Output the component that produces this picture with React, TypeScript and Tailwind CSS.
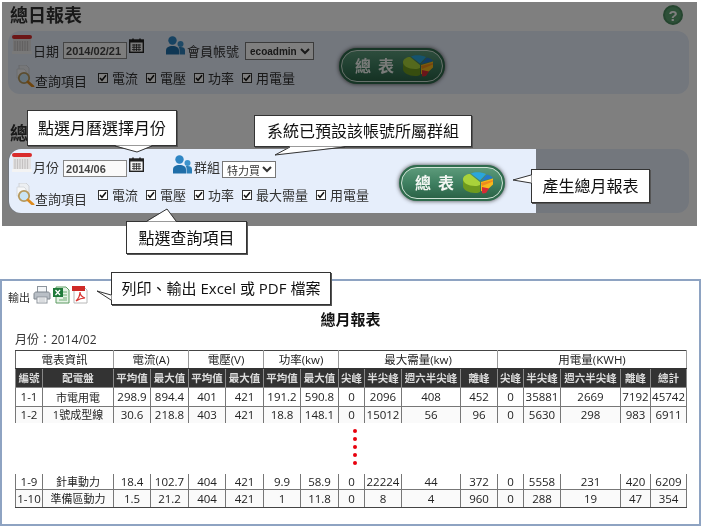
const dataTop: (string | number)[][] = [
  ["1-1", "市電用電", 298.9, 894.4, 401, 421, 191.2, 590.8, 0, 2096, 408, 452, 0, 35881, 2669, 7192, 45742],
  ["1-2", "1號成型線", 30.6, 218.8, 403, 421, 18.8, 148.1, 0, 15012, 56, 96, 0, 5630, 298, 983, 6911],
]

const dataBottom: (string | number)[][] = [
  ["1-9", "針車動力", 18.4, 102.7, 404, 421, 9.9, 58.9, 0, 22224, 44, 372, 0, 5558, 231, 420, 6209],
  ["1-10", "準備區動力", 1.5, 21.2, 404, 421, 1, 11.8, 0, 8, 4, 960, 0, 288, 19, 47, 354],
]

const groupHeads: [string, number][] = [
  ["電表資訊", 2],
  ["電流(A)", 2],
  ["電壓(V)", 2],
  ["功率(kw)", 2],
  ["最大需量(kw)", 4],
  ["用電量(KWH)", 5],
]

const colHeads = ["編號", "配電盤", "平均值", "最大值", "平均值", "最大值", "平均值", "最大值", "尖峰", "半尖峰", "週六半尖峰", "離峰", "尖峰", "半尖峰", "週六半尖峰", "離峰", "總計"]
const colWidths = [27, 71, 37, 38, 37, 38, 37, 38, 26, 37, 59, 37, 26, 37, 60, 30, 36]

const Cols = () => (
  <colgroup>
    {colWidths.map((w, i) => (
      <col key={i} style={{ width: w }} />
    ))}
  </colgroup>
)

const BigCalendar = () => (
  <svg width="20" height="19" viewBox="0 0 20 19" className="shrink-0">
    <rect x="1" y="3" width="18" height="15" fill="#e4e2e2" />
    <path d="M3 6v10M5.500 6v10M8 6v10M10.500 6v10M13 6v10M15.500 6v10" stroke="#c4c1c1" strokeWidth="1.200" />
    <rect x="0" y="16" width="20" height="3" fill="#f3f3f3" />
    <rect x="0" y="0" width="20" height="4" rx="2" fill="#d92c2c" />
  </svg>
)

const SmallCalendar = () => (
  <svg width="15" height="15" viewBox="0 0 15 15" className="shrink-0">
    <rect x="0.700" y="2" width="13.600" height="12.300" fill="#f4f4f4" stroke="#222" strokeWidth="1.400" />
    <rect x="1" y="2" width="13" height="2.500" fill="#222" />
    <path d="M4 0.500v3M11 0.500v3" stroke="#222" strokeWidth="1.500" />
    <path d="M3 7h9M3 9.300h9M3 11.600h9M5 6v7M7.500 6v7M10 6v7" stroke="#333" strokeWidth="0.900" />
  </svg>
)

const UsersIcon = () => (
  <svg width="19" height="19" viewBox="0 0 19 19" className="shrink-0">
    <circle cx="6.500" cy="4.500" r="4.200" fill="#2f86c4" />
    <circle cx="14.500" cy="8" r="3" fill="#3d93cc" />
    <path d="M0 18.500v-4c0-3 2.500-4.500 6.500-4.500s6.500 1.500 6.500 4.500v4z" fill="#1f6ea8" />
    <path d="M13.500 18.500v-5c0-1 -.3-1.700-.8-2.200 .6-.2 1.200-.3 1.900-.3 2.800 0 4.400 1 4.400 3v4.500z" fill="#2c7fb8" />
  </svg>
)

const SearchIcon = () => (
  <svg width="19" height="22" viewBox="0 0 19 22" className="shrink-0">
    <path d="M3 0h7l3 3v8H3z" fill="#eceff2" stroke="#c9ccd0" strokeWidth="0.800" />
    <path d="M1 4h7l2 2v7H1z" fill="#f6f7f8" stroke="#d2d4d8" strokeWidth="0.800" />
    <circle cx="8" cy="13" r="5.200" fill="#c9e4f5" stroke="#b79a5e" strokeWidth="1.800" />
    <path d="M12 17l5 4.500" stroke="#dd8a1d" strokeWidth="2.800" strokeLinecap="round" />
  </svg>
)

const PieIcon = () => (
  <svg width="32" height="22" viewBox="0 0 32 22">
    <path d="M1 6v8c0 4 6 7 12 7 3 0 4-.5 5-1v-7z" fill="#6f9a1e" />
    <path d="M1 7c0-3 4-5 7-5l10 8v3c-1 .5-3 1-5 1-7 0-12-3-12-7z" fill="#a9d23a" />
    <path d="M9 1.500c3-1.500 10-2 15 .5l-6 6.500z" fill="#2aa6dc" />
    <path d="M19 9l6-6.500c3 1 5 2 6 3.500z" fill="#2679c9" />
    <path d="M19 10l12-3.500v6L23 20l-4-1z" fill="#f6b91c" />
    <path d="M19 11l12-3v1.500L20 14z" fill="#ef8b1d" />
    <path d="M20 15l7 1.500-3 4.500c-2 .5-4 .5-4 0z" fill="#d52b35" />
  </svg>
)

const SummaryButton = () => (
  <button className="flex h-[36px] w-[106px] shrink-0 rounded-full bg-[#2f6b4d] p-[2px] shadow-[0_0_4px_#444]">
    <span className="flex h-full w-full items-center rounded-full border border-[#cfe3d6] bg-gradient-to-b from-[#5c9a7a] via-[#3f8061] to-[#2b6347] pl-[13px]">
      <span className="text-[16px] leading-none font-bold text-[#f2f6f2]">總</span>
      <span className="ml-[7px] text-[16px] leading-none font-bold text-[#f2f6f2]">表</span>
      <span className="ml-[8px] flex">
        <PieIcon />
      </span>
    </span>
  </button>
)

const Check = ({ label }: { label: string }) => (
  <label className="flex items-center gap-[4px] text-[13px] leading-[14px] text-[#333]">
    <span className="flex h-[10px] w-[10px] items-center justify-center border border-[#333] bg-white">
      <svg width="8" height="8" viewBox="0 0 8 8">
        <path d="M1 4l2 2.300L7 1.200" fill="none" stroke="#111" strokeWidth="1.500" />
      </svg>
    </span>
    {label}
  </label>
)

const QueryRow = ({ items, gaps }: { items: string[]; gaps: string }) => (
  <div className="mt-[5px] flex h-[22px] pl-[4px]">
    <SearchIcon />
    <span className="mt-[9px] text-[13px] leading-[14px] text-[#333]">查詢項目</span>
    <div className={gaps}>
      {items.map((item) => (
        <Check key={item} label={item} />
      ))}
    </div>
  </div>
)

const DateInput = ({ value }: { value: string }) => (
  <input
    readOnly
    value={value}
    className="mb-px ml-[4px] h-[17px] w-[64px] border border-[#888] bg-[#fafafa] pl-[2px] text-[11px] font-bold text-[#444] outline-none font-['Liberation_Sans',sans-serif]"
  />
)

const Tails = () => (
  <svg width="704" height="529" className="pointer-events-none absolute top-0 left-0 z-30">
    <polygon points="115,145.500 137,152 152,145.500" fill="#fff" />
    <polyline points="115,146 137,152 152,146" fill="none" stroke="#333" />
    <polygon points="290,146.500 275,155 345,146.500" fill="#fff" />
    <polyline points="290,147 275,155 345,147" fill="none" stroke="#333" />
    <polygon points="147,221.500 167,209 176,221.500" fill="#fff" />
    <polyline points="147,221 167,209 176,221" fill="none" stroke="#333" />
    <polygon points="531.500,175 513,180 531.500,183" fill="#fff" />
    <polyline points="531,175 513,180 531,183" fill="none" stroke="#333" />
    <polygon points="111.500,295 97,291 111.500,300" fill="#fff" />
    <polyline points="111,295 97,291 111,300" fill="none" stroke="#333" />
  </svg>
)

const Callout = ({ className, children }: { className: string; children: React.ReactNode }) => (
  <div className={`absolute z-30 flex items-center justify-center border border-[#333] bg-white text-[#111] shadow-[1px_1px_0_#555] ${className}`}>
    {children}
  </div>
)

const PrinterIcon = () => (
  <svg width="18" height="18" viewBox="0 0 18 18">
    <rect x="4.500" y="0.500" width="9" height="7" fill="#f4f6f8" stroke="#8d949c" />
    <path d="M1 8c0-1 1-2 2-2h12c1 0 2 1 2 2v5H1z" fill="#b9bfc6" stroke="#7f868e" />
    <rect x="4" y="11" width="10" height="6" fill="#fff" stroke="#8d949c" />
    <path d="M5.500 13h7M5.500 15h7" stroke="#b5bac0" />
  </svg>
)

const ExcelIcon = () => (
  <svg width="17" height="18" viewBox="0 0 17 18">
    <path d="M3 1h10l3 3v13H3z" fill="#e6f2e6" stroke="#5c9b62" />
    <rect x="0" y="2" width="10" height="9" fill="#1f7a3a" />
    <path d="M2.500 4l4.500 5M7 4L2.500 9" stroke="#fff" strokeWidth="1.300" />
    <path d="M10 6h4M10 9h4M10 12h4M6 14h8" stroke="#6fae74" />
  </svg>
)

const PdfIcon = () => (
  <svg width="17" height="18" viewBox="0 0 17 18">
    <path d="M2 1h10l3 3v13H2z" fill="#fff" stroke="#b8b8b8" />
    <rect x="0" y="0" width="13" height="5" fill="#cf2a27" />
    <path d="M4 15c2-2 4-6 4-9 0 3 2 5 5 6-3 0-6 1-9 3z" fill="none" stroke="#d8322f" strokeWidth="1.200" />
  </svg>
)

const App: React.FC = () => {
  return (
    <div className="relative h-[529px] w-[704px] overflow-hidden bg-white blur-[0.3px] font-['Open_Sans','Noto_Sans_CJK_TC',sans-serif]">
      {/* dimmed page, only the month form stays bright */}
      <section className="relative mt-[2px] ml-[2px] h-[224px] w-[695px] bg-white pt-px pr-[8px] pl-[6px]">
        <div className="absolute inset-0 z-10 bg-black/50" />

        <div className="flex h-[28px] items-center justify-between pr-[6px] pb-[4px] pl-[2px]">
          <h1 className="text-[18px] leading-none font-bold text-[#333]">總日報表</h1>
          <span className="flex h-[20px] w-[20px] items-center justify-center rounded-full border-2 border-[#4a8a5e] bg-[#5aa070] text-[15px] leading-none font-bold text-white font-['Liberation_Sans',sans-serif]">
            ?
          </span>
        </div>

        <div className="flex h-[63px] rounded-xl bg-[#e6eefb]">
          <div className="ml-px flex rounded-l-xl pl-[3px]">
            <div className="pt-[4px]">
              <div className="flex h-[25px] items-end">
                <div className="self-start">
                  <BigCalendar />
                </div>
                <span className="mb-px ml-px text-[13px] leading-[16px] text-[#333]">日期</span>
                <DateInput value="2014/02/21" />
                <div className="ml-[2px] self-start pt-[3px]">
                  <SmallCalendar />
                </div>
                <div className="ml-[22px] self-start pt-px">
                  <UsersIcon />
                </div>
                <span className="mb-px ml-[2px] text-[13px] leading-[16px] text-[#333]">會員帳號</span>
                <select className="ml-[6px] h-[18px] w-[69px] border border-[#777] bg-white pl-0 text-[10px] font-bold text-[#333] font-['Liberation_Sans',sans-serif]">
                  <option>ecoadmin</option>
                </select>
              </div>
              <QueryRow items={["電流", "電壓", "功率", "用電量"]} gaps="mt-[6px] ml-[11px] flex h-[14px] gap-[8px]" />
            </div>
            <div className="mt-[17px] ml-[25px]">
              <SummaryButton />
            </div>
          </div>
        </div>

        <div className="flex h-[55px] items-end pb-[7px] pl-[2px]">
          <h2 className="text-[18px] leading-none font-bold text-[#333]">總</h2>
        </div>

        <div className="flex h-[64px] rounded-xl bg-[#e6eefb]">
          <div className="relative z-20 ml-px flex w-[527px] rounded-l-xl bg-[#e6eefb] pl-[3px]">
            <div className="pt-[4px]">
              <div className="flex h-[25px] items-end">
                <div className="self-start">
                  <BigCalendar />
                </div>
                <span className="mb-[3px] ml-px text-[13px] leading-[16px] text-[#333]">月份</span>
                <DateInput value="2014/06" />
                <div className="ml-[2px] self-start pt-[4px]">
                  <SmallCalendar />
                </div>
                <div className="ml-[29px] self-start pt-[2px]">
                  <UsersIcon />
                </div>
                <span className="mb-[3px] ml-[2px] text-[13px] leading-[16px] text-[#333]">群組</span>
                <select className="ml-[2px] h-[17px] w-[54px] border border-[#777] bg-white text-[11px] text-[#333]">
                  <option>特力買</option>
                </select>
              </div>
              <QueryRow items={["電流", "電壓", "功率", "最大需量", "用電量"]} gaps="mt-[5px] ml-[11px] flex h-[14px] gap-[8px]" />
            </div>
            <div className="mt-[16px] ml-[30px]">
              <SummaryButton />
            </div>
          </div>
        </div>
      </section>

      {/* report preview */}
      <section className="mt-[53px] h-[247px] w-[701px] border-2 border-[#8ea3c2] bg-white">
        <div className="flex h-[24px] items-end pl-[6px]">
          <span className="mb-[1px] text-[11px] leading-[12px] text-[#333]">輸出</span>
          <span className="mb-[1px] ml-[3px] flex items-end gap-[2px]">
            <PrinterIcon />
            <ExcelIcon />
            <PdfIcon />
          </span>
        </div>
        <h2 className="mt-px flex h-[27px] items-center justify-center text-[15px] font-bold text-[#111]">總月報表</h2>
        <div className="ml-[13px] h-[17px] text-[12px] leading-[14px] text-[#333]">月份：2014/02</div>

        <div className="ml-[13px] w-[671px] text-[#222]">
          <table className="w-[671px] table-fixed border-collapse text-center text-[11.500px] leading-none">
            <Cols />
            <thead>
              <tr className="h-[18px]">
                {groupHeads.map(([label, span]) => (
                  <th key={label} colSpan={span} className="border border-t-[#444] border-r-[#999] border-b-[#333] border-l-[#666] p-0 text-[11.500px] font-normal">
                    {label}
                  </th>
                ))}
              </tr>
              <tr className="h-[19px] bg-[#333]">
                {colHeads.map((label, i) => (
                  <th key={i} className="border border-[#888] bg-[#333] p-0 text-[10.500px] font-bold whitespace-nowrap text-[#ddd]">
                    {label}
                  </th>
                ))}
              </tr>
            </thead>
            <tbody>
              {dataTop.map((row, r) => (
                <tr key={r} className={r === 0 ? "h-[19px]" : "h-[16px] bg-[#fafafa]"}>
                  {row.map((cell, c) => (
                    <td key={c} className={`border-x border-[#777] p-0 whitespace-nowrap ${r === 0 ? "border-b" : ""} ${c === 1 ? "text-[11px]" : ""}`}>
                      {cell}
                    </td>
                  ))}
                </tr>
              ))}
            </tbody>
          </table>

          <div className="ml-[338px] flex h-[51px] w-[4px] flex-col gap-[4px] pt-[6px]">
            {[0, 1, 2, 3, 4].map((d) => (
              <span key={d} className="h-[4px] w-[4px] shrink-0 rounded-full bg-[#e8000d]" />
            ))}
          </div>

          <table className="w-[671px] table-fixed border-collapse text-center text-[11.500px] leading-none">
            <Cols />
            <tbody>
              {dataBottom.map((row, r) => (
                <tr key={r} className={r === 0 ? "h-[16px]" : "h-[18px] bg-[#fafafa]"}>
                  {row.map((cell, c) => (
                    <td key={c} className={`border-x border-[#777] p-0 whitespace-nowrap ${r === 0 ? "border-b" : "border-b border-b-[#444]"} ${c === 1 ? "text-[11px]" : ""}`}>
                      {cell}
                    </td>
                  ))}
                </tr>
              ))}
            </tbody>
          </table>
        </div>
      </section>

      <Callout className="top-[110px] left-[27px] h-[36px] w-[150px] text-[16px]">點選月曆選擇月份</Callout>
      <Callout className="top-[115px] left-[254px] h-[32px] w-[218px] text-[16px]">系統已預設該帳號所屬群組</Callout>
      <Callout className="top-[221px] left-[126px] h-[33px] w-[121px] text-[16px]">點選查詢項目</Callout>
      <Callout className="top-[169px] left-[531px] h-[34px] w-[119px] text-[16px]">產生總月報表</Callout>
      <Callout className="top-[272px] left-[111px] h-[33px] w-[220px] text-[15px]">列印、輸出 Excel 或 PDF 檔案</Callout>
      <Tails />
    </div>
  )
}

export default App
